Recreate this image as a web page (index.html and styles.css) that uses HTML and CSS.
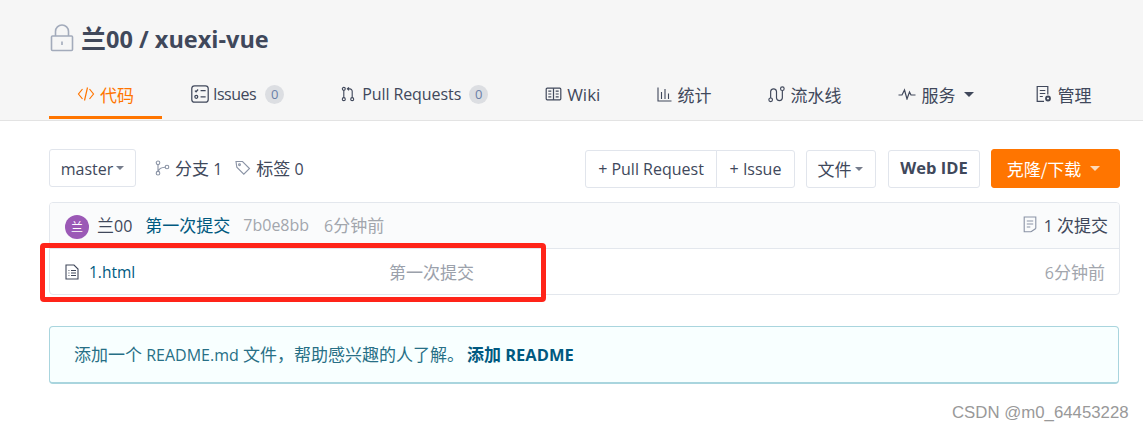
FILE: index.html
```html
<!DOCTYPE html>
<html lang="zh-CN">
<head>
<meta charset="utf-8">
<title>兰00 / xuexi-vue</title>
<link rel="stylesheet" href="styles.css">
</head>
<body>
<header class="head">
  <h1 class="title">
    <svg class="lock" width="24" height="28" viewBox="0 0 24 28" fill="none" stroke="#a3abbb" stroke-width="1.6"><rect x="1.500" y="12" width="21" height="14.500" rx="1"/><path d="M5.500 12V7.500a6.500 6.500 0 0 1 13 0V12"/><path d="M12 17.500v3.500"/></svg>
    <span><span class="cn-title">兰</span>00 / xuexi-vue</span>
  </h1>
  <nav class="tabs">
    <a class="tab active"><svg width="18" height="16" viewBox="0 0 17 16" fill="none" stroke="#ff7500" stroke-width="1.200"><path d="M5 3 1 8l4 5M12 3l4 5-4 5M10 1.500 7 14.500"/></svg><span class="cn">代码</span></a>
    <a class="tab issues"><svg width="18" height="18" viewBox="0 0 16 16" fill="none" stroke="#40485b" stroke-width="1.100"><rect x=".7" y=".7" width="14.600" height="14.600" rx="2.500"/><path d="m3.500 5 1 1 1.800-2M8.500 5H13M8.500 10.500H13"/><circle cx="4.700" cy="10.500" r="1.300"/></svg><span class="tight">Issues</span><b class="count">0</b></a>
    <a class="tab pr"><svg width="14" height="16" viewBox="0 0 15 16" fill="none" stroke="#40485b" stroke-width="1.200"><circle cx="3" cy="2.500" r="1.600"/><circle cx="3" cy="13.500" r="1.600"/><circle cx="12" cy="13.500" r="1.600"/><path d="M3 4.100v7.800M12 11.900V5a2.500 2.500 0 0 0-2.500-2.500H7M8.500.8 6.800 2.500l1.700 1.700"/></svg><span class="pr-label">Pull Requests</span><b class="count">0</b></a>
    <a class="tab wiki"><svg width="17" height="14" viewBox="0 0 16 14" fill="none" stroke="#40485b" stroke-width="1.200"><rect x=".7" y="1.200" width="14.600" height="11.600" rx="1"/><path d="M8 1.200v11.600M2.800 4.200h3M2.800 7h3M2.800 9.800h3M10.200 4.200h3M10.200 7h3M10.200 9.800h3"/></svg>Wiki</a>
    <a class="tab"><svg width="15" height="15" viewBox="0 0 15 15" fill="none" stroke="#40485b" stroke-width="1.100"><path d="M1 .5v13.500h13.500M4.500 5v7M8 2v10M11.500 6.500V12"/></svg><span class="cn">统计</span></a>
    <a class="tab"><svg width="17" height="17" viewBox="0 0 16 16" fill="none" stroke="#40485b" stroke-width="1.100"><circle cx="2.500" cy="13" r="1.700"/><circle cx="13.500" cy="2.500" r="1.700"/><path d="M2.500 11.300V5a2.800 2.800 0 0 1 5.500 0v6.500a2.800 2.800 0 0 0 5.500 0V4.200"/></svg><span class="cn">流水线</span></a>
    <a class="tab"><svg width="18" height="12" viewBox="0 0 17 12" fill="none" stroke="#40485b" stroke-width="1.200"><path d="M0 7h3.500L6 2l2.500 9L11 4l1.500 3H17"/></svg><span class="cn">服务</span><i class="caret dark"></i></a>
    <a class="tab last"><svg width="16" height="18" viewBox="0 0 16 17" fill="none" stroke="#40485b" stroke-width="1.200"><path d="M8 15.800H1.200V1h10.600v8M3.800 5h5.500M3.800 8h5.500M3.800 11h3"/><circle cx="12" cy="13" r="2" stroke-width="1.800"/></svg><span class="cn">管理</span></a>
  </nav>
</header>

<main class="main">
  <section class="toolbar">
    <div class="group">
      <button class="btn branch">master<i class="caret grey"></i></button>
      <span class="stat"><svg width="15" height="16" viewBox="0 0 15 16" fill="none" stroke="#8a93a5" stroke-width="1.100"><circle cx="3" cy="2.800" r="1.800"/><circle cx="3" cy="13.200" r="1.800"/><circle cx="12" cy="7" r="1.800"/><path d="M3 4.600v6.800M10.200 7.300C7 7.500 4 8 3.300 11.400"/></svg><span><span class="cn">分支</span> 1</span></span>
      <span class="stat"><svg width="16" height="16" viewBox="0 0 16 16" fill="none" stroke="#8a93a5" stroke-width="1.100"><path d="M1 1.500h6.500l7 7-5.700 5.700-7-7z"/><circle cx="4.500" cy="4.800" r=".9"/></svg><span><span class="cn">标签</span> 0</span></span>
    </div>
    <div class="group actions">
      <div class="joined"><button class="btn">+ Pull Request</button><button class="btn">+ Issue</button></div>
      <button class="btn file"><span class="cn">文件</span><i class="caret grey"></i></button>
      <button class="btn ide">Web IDE</button>
      <button class="btn clone"><span class="cn">克隆/下载</span><i class="caret light"></i></button>
    </div>
  </section>

  <section class="repo">
    <div class="commit">
      <div class="commit-left">
        <span class="avatar">兰</span>
        <span class="author"><span class="cn">兰</span>00</span>
        <a class="msg cn">第一次提交</a>
        <span class="muted sha">7b0e8bb</span>
        <span class="muted">6<span class="cn">分钟前</span></span>
      </div>
      <span class="commits"><svg width="15" height="17" viewBox="0 0 15 17" fill="none" stroke="#8a93a5" stroke-width="1.100"><path d="M8 15.800H1.200V1h11.600v11.500M3.800 5h6.400M3.800 8h6.400M3.800 11h3.500M12.800 12.500 8 15.800"/></svg><span>1 <span class="cn">次提交</span></span></span>
    </div>
    <div class="row">
      <a class="file-name"><svg width="14" height="16" viewBox="0 0 14 16" fill="none" stroke="#40485b" stroke-width="1.100"><path d="M1 1h8l4 4v10H1z"/><path d="M3.500 6.500h.9M6 6.500h5M3.500 9h.9M6 9h5M3.500 11.500h.9M6 11.500h5"/></svg>1.html</a>
      <span class="row-msg cn">第一次提交</span>
      <span class="row-time">6<span class="cn">分钟前</span></span>
    </div>
  </section>

  <section class="notice"><span><span class="cn">添加一个</span> README.md <span class="cn">文件，帮助感兴趣的人了解。</span></span><a class="notice-link"><span class="cn">添加</span> README</a></section>
</main>

<div class="mark"></div>
<div class="credit">CSDN @m0_64453228</div>
</body>
</html>
```
FILE: styles.css
```css
* { box-sizing: border-box; }
html, body { margin: 0; padding: 0; }
body {
  position: relative;
  width: 1143px;
  height: 430px;
  overflow: hidden;
  background: #fff;
  color: #40485b;
  font-family: "Open Sans", "Noto Sans CJK SC", sans-serif;
  font-size: 16px;
}
button { font: inherit; color: inherit; background: #fff; }
.cn { font-size: 17px; font-family: "Noto Sans CJK SC", sans-serif; }
.cn-title { font-size: 25px; font-family: "Noto Sans CJK SC", sans-serif; }
.tight { letter-spacing: -.5px; }

.head {
  height: 121px;
  padding: 23px 0 0 49px;
  background: #f6f6f6;
  border-bottom: 1px solid #e3e3e3;
}
.title {
  display: flex;
  align-items: center;
  gap: 7px;
  height: 30px;
  margin: 0 0 0 1px;
  font-size: 23.500px;
  font-weight: 700;
  line-height: 30px;
}
.tabs { display: flex; margin-top: 15px; gap: 1px; }
.tab {
  display: flex;
  align-items: center;
  gap: 5px;
  height: 51px;
  padding: 4px 28px 0;
  border-bottom: 3px solid transparent;
  line-height: 1;
  white-space: nowrap;
}
.tab.issues { gap: 4px; }
.tab.issues .count { margin-left: 5px; }
.tab.pr { gap: 7px; }
.tab.pr .count { margin-left: 1px; }
.pr-label { letter-spacing: -.08px; }
.tab.wiki { font-size: 17px; }
.tab.last { margin-left: 5px; }
.tab.active { color: #ff7500; border-bottom-color: #ff7500; }
.count {
  display: inline-flex;
  align-items: center;
  justify-content: center;
  width: 19px;
  height: 19px;
  margin-left: 3px;
  border-radius: 50%;
  background: #dcdee2;
  color: #6b80a8;
  font-size: 13px;
  font-weight: 400;
}
.caret {
  display: inline-block;
  width: 0;
  height: 0;
  border-left: 5px solid transparent;
  border-right: 5px solid transparent;
  border-top: 5px solid #40485b;
}
.caret.dark { margin-left: 4px; }
.caret.grey { margin-left: 3px; border-width: 4px 4px 0; border-top-color: #767d8c; }
.caret.light { margin-left: 9px; border-top-color: #ffd9b8; }

.main { padding: 28px 23px 0 49px; }
.toolbar { display: flex; justify-content: space-between; align-items: flex-start; height: 39px; }
.group { display: flex; align-items: center; }
.btn {
  display: inline-flex;
  align-items: center;
  justify-content: center;
  height: 38px;
  padding: 0;
  border: 1px solid #e1e5ec;
  border-radius: 3px;
  white-space: nowrap;
  line-height: 1;
}
.branch { width: 87px; padding-top: 2px; }
.branch .caret { margin-top: -2px; }
.stat { display: inline-flex; align-items: center; gap: 5px; margin-left: 19px; line-height: 1; }
.stat + .stat { margin-left: 13px; }
.joined { display: flex; }
.joined .btn:first-child { width: 132px; border-radius: 3px 0 0 3px; }
.joined .btn:last-child { width: 79px; margin-left: -1px; border-radius: 0 3px 3px 0; }
.file { width: 70px; margin-left: 11px; padding-right: 2px; }
.ide { width: 92px; margin-left: 12px; font-size: 16.500px; font-weight: 700; }
.clone {
  width: 129px;
  height: 39px;
  margin-left: 11px;
  padding-right: 4px;
  border-color: #ff7500;
  background: #ff7500;
  color: #fff;
}

.repo {
  width: 1071px;
  height: 93px;
  margin-top: 14px;
  border: 1px solid #e3e7ed;
  border-radius: 4px;
  overflow: hidden;
}
.commit {
  display: flex;
  justify-content: space-between;
  align-items: center;
  height: 46px;
  padding: 0 11px 2px 15px;
  background: #fafbfc;
  border-bottom: 1px solid #e3e7ed;
}
.commit-left { display: flex; align-items: center; }
.avatar {
  display: inline-flex;
  align-items: center;
  justify-content: center;
  width: 24px;
  height: 24px;
  margin-top: 5px;
  border-radius: 50%;
  background: #9b59b6;
  color: #fff;
  font-size: 12px;
}
.author { margin-left: 8px; }
.msg { margin-left: 13px; color: #005980; }
.muted { color: #a2a6ad; }
.sha { margin-left: 13px; margin-right: 15px; }
.commits { display: inline-flex; align-items: center; gap: 6px; }
.row { display: flex; align-items: center; height: 46px; padding: 0 14px 0 15px; }
.file-name { display: inline-flex; align-items: center; gap: 10px; width: 324px; color: #005980; font-size: 15.500px; }
.row-msg { margin-top: -2px; color: #9ba1ab; }
.row-time { margin-top: -2px; margin-left: auto; color: #a2a6ad; }

.notice {
  display: flex;
  align-items: center;
  width: 1070px;
  height: 58px;
  margin-top: 31px;
  padding: 0 0 2px 24px;
  border: 1px solid #a9d5de;
  border-bottom-width: 2px;
  border-radius: 4px;
  background: #f8ffff;
  color: #276f86;
}
.notice-link { margin-left: 3px; color: #005980; font-size: 16.500px; font-weight: 700; }

.mark {
  position: absolute;
  left: 40px;
  top: 243px;
  width: 506px;
  height: 59px;
  border: 5px solid #ff2419;
  border-radius: 4px;
}
.credit {
  position: absolute;
  left: 952px;
  top: 403px;
  color: #999;
  font-family: "Liberation Sans", sans-serif;
  font-size: 16.800px;
  line-height: 20px;
}
```
